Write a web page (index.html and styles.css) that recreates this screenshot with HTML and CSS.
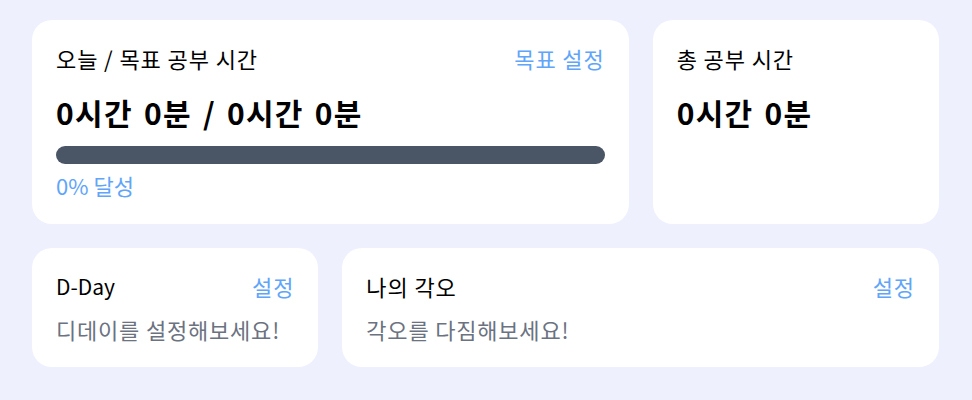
FILE: index.html
```html
<!DOCTYPE html>
<html>
<head>
<meta charset="utf-8">
<link rel="stylesheet" href="styles.css">
</head>
<body>
<main class="grid">
  <section class="card span2">
    <div class="head">
      <span class="title">오늘 / 목표 공부 시간</span>
      <a class="link">목표 설정</a>
    </div>
    <div class="big">0시간 0분 / 0시간 0분</div>
    <div class="bar"></div>
    <div class="pct">0% 달성</div>
  </section>
  <section class="card">
    <div class="head">
      <span class="title">총 공부 시간</span>
    </div>
    <div class="big">0시간 0분</div>
  </section>
  <section class="card small">
    <div class="head">
      <span class="title latin">D-Day</span>
      <a class="link">설정</a>
    </div>
    <div class="muted">디데이를 설정해보세요!</div>
  </section>
  <section class="card small span2">
    <div class="head">
      <span class="title">나의 각오</span>
      <a class="link">설정</a>
    </div>
    <div class="muted">각오를 다짐해보세요!</div>
  </section>
</main>
</body>
</html>
```

FILE: styles.css
```css
* { box-sizing: border-box; }
html, body { margin: 0; }
body {
  background: #eef0fd;
  font-family: "Noto Sans CJK KR", sans-serif;
  color: #000;
  width: 972px;
  height: 400px;
}
.grid {
  display: grid;
  grid-template-columns: repeat(3, 1fr);
  gap: 24px;
  padding: 20px 33px 0 32px;
}
.card {
  background: #fff;
  border-radius: 20px;
  padding: 23px 24px 24px;
  height: 204px;
}
.card.small { height: 119px; padding-top: 23px; }
.span2 { grid-column: span 2; }
.head {
  display: flex;
  justify-content: space-between;
  align-items: center;
  font-size: 22px;
  line-height: 30px;
  letter-spacing: 0.9px;
}
.title.latin { font-size: 21px; letter-spacing: 0; }
.link { color: #60a5fa; cursor: pointer; }
.big {
  font-size: 30px;
  font-weight: bold;
  line-height: 40px;
  margin-top: 19px;
  letter-spacing: 1.3px;
  word-spacing: 3px;
}
.bar {
  height: 18px;
  border-radius: 9px;
  background: #4a5565;
  margin-top: 14px;
}
.pct {
  color: #60a5fa;
  font-size: 22px;
  line-height: 30px;
  margin-top: 6px;
}
.muted {
  color: #6b7280;
  font-size: 22px;
  line-height: 30px;
  margin-top: 13px;
  letter-spacing: 0.8px;
}
```
